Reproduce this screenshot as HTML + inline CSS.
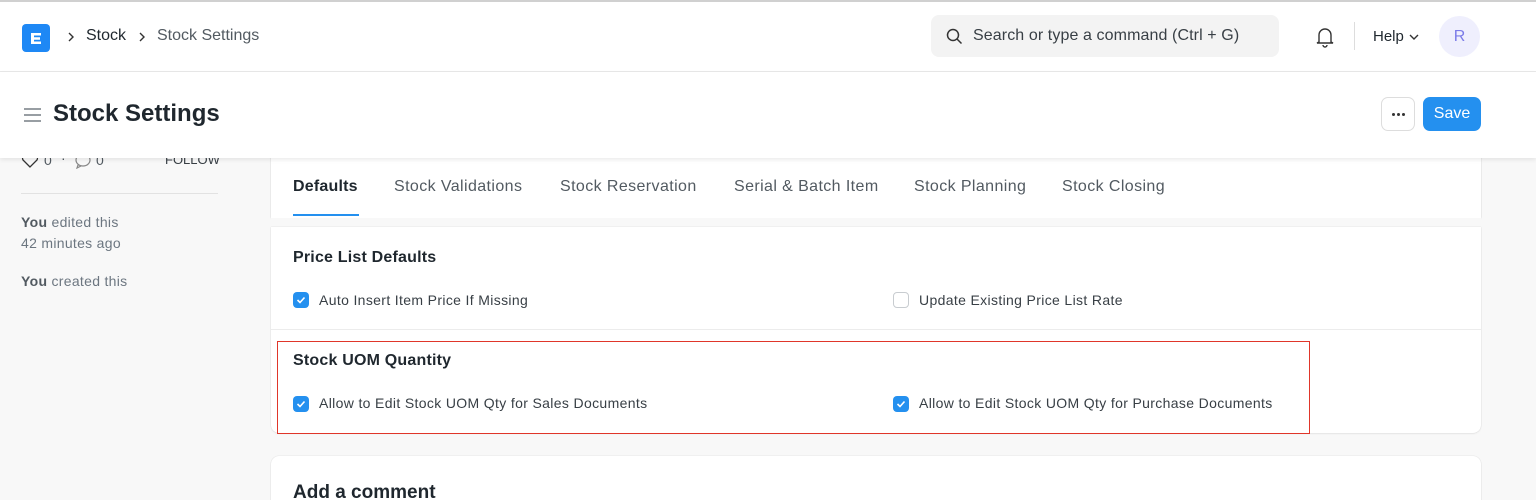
<!DOCTYPE html>
<html><head><meta charset="utf-8"><style>
*{box-sizing:border-box;margin:0;padding:0}
html,body{width:1536px;height:500px;overflow:hidden}
body{background:#f8f8f8;font-family:"Liberation Sans",sans-serif;color:#1f272e;position:relative}
.a{position:absolute;white-space:nowrap}
.nav{position:absolute;left:0;top:0;width:1536px;height:72px;background:#fff;border-top:2px solid #d0d0d0;border-bottom:1px solid #e8e8e8}
.head{position:absolute;left:0;top:72px;width:1536px;height:86px;background:#fff;box-shadow:0 2px 4px rgba(0,0,0,.08);z-index:2}
.card{position:absolute;left:271px;background:#fff;border-radius:8px;box-shadow:0 0 1px rgba(0,0,0,.2),0 1px 2px rgba(0,0,0,.05)}
.cb{position:absolute;width:16px;height:16px;border-radius:4px;background:#2490ef}
.cb svg{position:absolute;left:3px;top:3px}
.cbe{position:absolute;width:16px;height:16px;border-radius:4px;border:1px solid #c8ccd0;background:#fff}
.lbl{font-size:14px;color:#383f45;letter-spacing:.35px}
.tab{font-size:16px;color:#525a61;top:178px;letter-spacing:.4px}
.red{position:absolute;background:#e0362a;z-index:5}
</style></head><body>
<div class="nav">
 <div class="a" style="left:22px;top:22px;width:28px;height:28px;background:#1e88f5;border-radius:4px"></div>
 <svg class="a" style="left:29px;top:29px" width="14" height="14" viewBox="0 0 14 14"><path d="M2 2h10v2.5H5v1.8h6v2.4H5v1.8h7V13H2z" fill="#fff"/></svg>
 <svg class="a" style="left:66px;top:30px" width="10" height="10" viewBox="0 0 10 10"><path d="M3 1l4 4-4 4" stroke="#333" stroke-width="1.4" fill="none"/></svg>
 <div class="a" style="left:86px;top:25px;font-size:16px;color:#1f272e">Stock</div>
 <svg class="a" style="left:137px;top:30px" width="10" height="10" viewBox="0 0 10 10"><path d="M3 1l4 4-4 4" stroke="#333" stroke-width="1.4" fill="none"/></svg>
 <div class="a" style="left:157px;top:25px;font-size:16px;color:#525a61">Stock Settings</div>
 <div class="a" style="left:931px;top:13px;width:348px;height:42px;background:#f3f3f3;border-radius:8px"></div>
 <svg class="a" style="left:946px;top:26px" width="17" height="17" viewBox="0 0 17 17"><circle cx="7" cy="7" r="5.5" stroke="#333" stroke-width="1.5" fill="none"/><path d="M11 11l4.5 4.5" stroke="#333" stroke-width="1.5"/></svg>
 <div class="a" style="left:973px;top:25px;font-size:16px;color:#383f45;letter-spacing:.1px">Search or type a command (Ctrl + G)</div>
 <svg class="a" style="left:1315px;top:24px" width="20" height="22" viewBox="0 0 20 22"><path d="M4 16V9a6 6 0 0112 0v7l2 1H2z" stroke="#333" stroke-width="1.4" fill="none"/><path d="M8 19a2 2 0 004 0" stroke="#333" stroke-width="1.4" fill="none"/></svg>
 <div class="a" style="left:1354px;top:20px;width:1px;height:28px;background:#ddd"></div>
 <div class="a" style="left:1373px;top:26px;font-size:15px;color:#1f272e">Help</div>
 <svg class="a" style="left:1408px;top:31px" width="12" height="8" viewBox="0 0 12 8"><path d="M2 2l4 4 4-4" stroke="#333" stroke-width="1.4" fill="none"/></svg>
 <div class="a" style="left:1439px;top:14px;width:41px;height:41px;border-radius:50%;background:#efeffd;color:#7c7ce8;font-size:16px;text-align:center;line-height:41px">R</div>
</div>
<div class="head">
 <svg class="a" style="left:23px;top:35px" width="19" height="16" viewBox="0 0 19 16"><path d="M1 2h17M1 8h17M1 14h17" stroke="#8a9096" stroke-width="1.8"/></svg>
 <div class="a" style="left:53px;top:28px;font-size:24px;font-weight:bold;color:#1f272e">Stock Settings</div>
 <div class="a" style="left:1381px;top:25px;width:34px;height:34px;border:1px solid #ddd;border-radius:7px;background:#fff;display:flex;align-items:center;justify-content:center;gap:2px"><i style="width:3px;height:3px;border-radius:50%;background:#333"></i><i style="width:3px;height:3px;border-radius:50%;background:#333"></i><i style="width:3px;height:3px;border-radius:50%;background:#333"></i></div>
 <div class="a" style="left:1423px;top:25px;width:58px;height:34px;background:#2490ef;border-radius:7px;color:#fff;text-align:center;line-height:34px;font-size:16px">Save</div>
</div>
<svg class="a" style="left:21px;top:152px" width="18" height="16" viewBox="0 0 18 16"><path d="M9 15L2 8a4 4 0 016-5l1 1 1-1a4 4 0 016 5z" stroke="#333" stroke-width="1.3" fill="none"/></svg>
<div class="a" style="left:44px;top:152px;font-size:14px;color:#525a61">0</div>
<div class="a" style="left:61px;top:150px;font-size:14px;color:#525a61">·</div>
<svg class="a" style="left:74px;top:152px" width="18" height="17" viewBox="0 0 18 17"><path d="M9 2a7 6 0 107 6 7 6 0 00-7-6zM4 13l-1 3 4-2" stroke="#888" stroke-width="1.2" fill="none"/></svg>
<div class="a" style="left:96px;top:152px;font-size:14px;color:#525a61">0</div>
<div class="a" style="left:165px;top:152px;font-size:13px;color:#383f45">FOLLOW</div>
<div class="a" style="left:21px;top:193px;width:197px;height:1px;background:#e2e2e2"></div>
<div class="a" style="left:21px;top:214px;font-size:14px;color:#6c7680;letter-spacing:.3px"><b style="color:#525a61">You</b> edited this</div>
<div class="a" style="left:21px;top:235px;font-size:14px;color:#6c7680;letter-spacing:.3px">42 minutes ago</div>
<div class="a" style="left:21px;top:273px;font-size:14px;color:#6c7680;letter-spacing:.3px"><b style="color:#525a61">You</b> created this</div>

<div class="card" style="top:140px;width:1210px;height:78px;border-radius:0"></div>
<div class="a" style="left:271px;top:218px;width:1210px;height:9px;background:#f8f8f8"></div>
<div class="card" style="top:227px;width:1210px;height:206px;border-radius:0 0 8px 8px"></div>
<div class="a" style="left:271px;top:329px;width:1210px;height:1px;background:#ececec"></div>
<div class="a" style="left:293px;top:178px;font-size:16px;font-weight:bold;color:#1f272e;letter-spacing:.2px">Defaults</div>
<div class="a" style="left:293px;top:214px;width:66px;height:2px;background:#2490ef"></div>
<div class="a tab" style="left:394px">Stock Validations</div>
<div class="a tab" style="left:560px">Stock Reservation</div>
<div class="a tab" style="left:734px">Serial &amp; Batch Item</div>
<div class="a tab" style="left:914px">Stock Planning</div>
<div class="a tab" style="left:1062px">Stock Closing</div>

<div class="a" style="left:293px;top:249px;font-size:16px;font-weight:bold;letter-spacing:.2px">Price List Defaults</div>
<div class="cb" style="left:293px;top:292px"><svg width="10" height="10" viewBox="0 0 10 10"><path d="M1.5 5l2.5 2.5 4.5-5" stroke="#fff" stroke-width="1.6" fill="none"/></svg></div>
<div class="a lbl" style="left:319px;top:292px">Auto Insert Item Price If Missing</div>
<div class="cbe" style="left:893px;top:292px"></div>
<div class="a lbl" style="left:919px;top:292px">Update Existing Price List Rate</div>

<div class="a" style="left:293px;top:352px;font-size:16px;font-weight:bold;letter-spacing:.2px">Stock UOM Quantity</div>
<div class="cb" style="left:293px;top:396px"><svg width="10" height="10" viewBox="0 0 10 10"><path d="M1.5 5l2.5 2.5 4.5-5" stroke="#fff" stroke-width="1.6" fill="none"/></svg></div>
<div class="a lbl" style="left:319px;top:395px">Allow to Edit Stock UOM Qty for Sales Documents</div>
<div class="cb" style="left:893px;top:396px"><svg width="10" height="10" viewBox="0 0 10 10"><path d="M1.5 5l2.5 2.5 4.5-5" stroke="#fff" stroke-width="1.6" fill="none"/></svg></div>
<div class="a lbl" style="left:919px;top:395px">Allow to Edit Stock UOM Qty for Purchase Documents</div>
<div class="red" style="left:277px;top:341px;width:1033px;height:1px"></div>
<div class="red" style="left:277px;top:433px;width:1033px;height:1px"></div>
<div class="red" style="left:277px;top:341px;width:1px;height:93px"></div>
<div class="red" style="left:1309px;top:341px;width:1px;height:93px"></div>

<div class="card" style="top:456px;width:1210px;height:60px"></div>
<div class="a" style="left:293px;top:482px;font-size:19px;font-weight:bold">Add a comment</div>
</body></html>
